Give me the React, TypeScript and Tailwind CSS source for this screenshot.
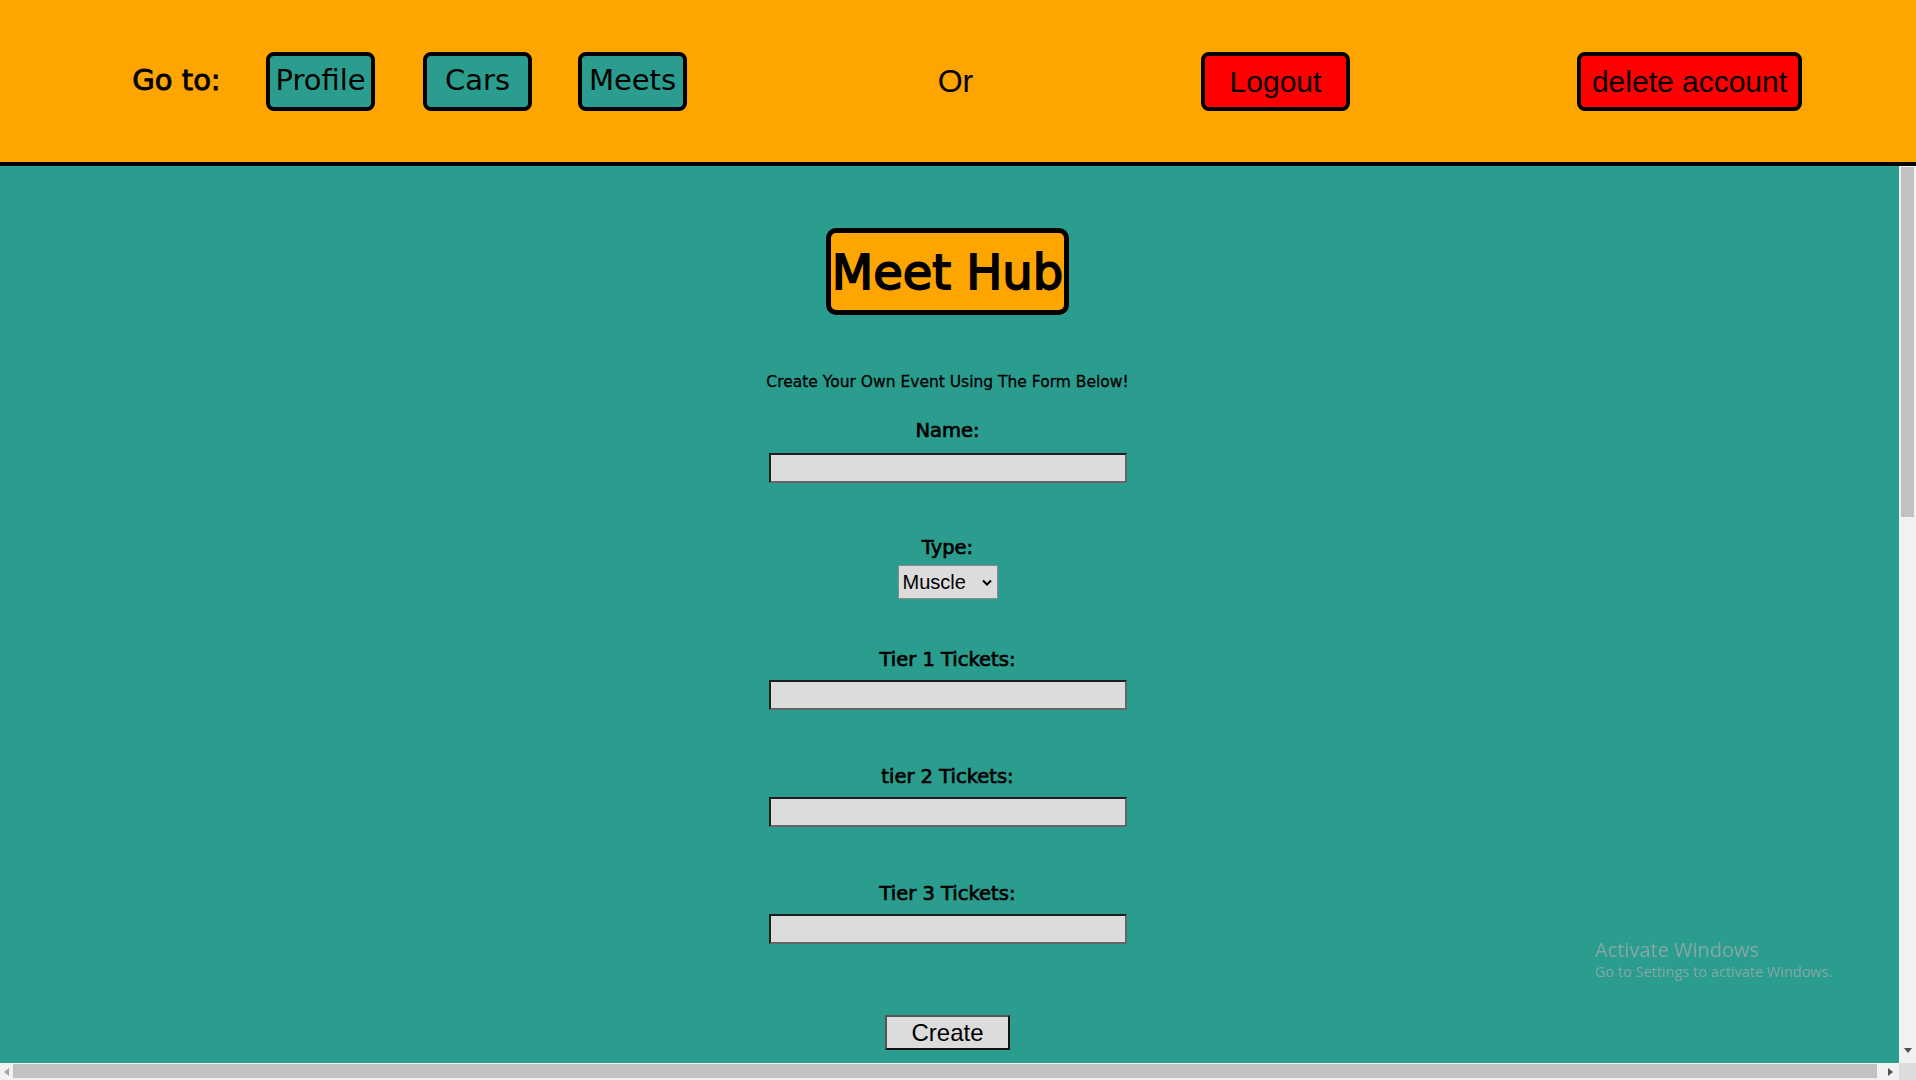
import { ReactNode } from "react";

const lucida = "font-['DejaVu_Sans',Verdana,sans-serif]";
const arial = "font-['Liberation_Sans',Arial,sans-serif]";

const NavButton = ({ children }: { children: ReactNode }) => (
  <button
    className={`w-[109px] h-[59px] shrink-0 flex items-center justify-center bg-[#2a9d8f] border-4 border-black rounded-[8px] text-[29px] text-black whitespace-nowrap ${lucida}`}
  >
    {children}
  </button>
);

const RedButton = ({ children, width }: { children: ReactNode; width: string }) => (
  <button
    className={`${width} h-[59px] shrink-0 flex items-center justify-center bg-[#ff0000] border-4 border-black rounded-[8px] text-[30px] text-black whitespace-nowrap ${arial}`}
  >
    {children}
  </button>
);

const Label = ({ children, mt }: { children: ReactNode; mt: string }) => (
  <label
    className={`${mt} block h-[24px] leading-[24px] text-[19.5px] text-black whitespace-nowrap [-webkit-text-stroke:0.7px_black] ${lucida}`}
  >
    {children}
  </label>
);

const Field = ({ mt }: { mt: string }) => (
  <input
    type="text"
    className={`${mt} block w-[358px] h-[30px] bg-[#dcdcdc] border-2 border-t-[#1e1e1e] border-l-[#1e1e1e] border-b-[#666666] border-r-[#666666] outline-none`}
  />
);

const App = () => {
  return (
    <div className="h-screen w-full flex flex-col overflow-hidden">
      <header className="h-[166px] shrink-0 w-full flex items-center bg-[#ffa500] border-b-4 border-black">
        <span
          className={`ml-[132px] w-[89px] shrink-0 text-center text-[29px] text-black whitespace-nowrap [-webkit-text-stroke:0.9px_black] ${lucida}`}
        >
          Go to:
        </span>
        <div className="ml-[45px]">
          <NavButton>Profile</NavButton>
        </div>
        <div className="ml-[48px]">
          <NavButton>Cars</NavButton>
        </div>
        <div className="ml-[46px]">
          <NavButton>Meets</NavButton>
        </div>
        <span
          className={`ml-[250px] w-[37px] shrink-0 text-center text-[32px] text-black whitespace-nowrap ${arial}`}
        >
          Or
        </span>
        <div className="ml-[227px]">
          <RedButton width="w-[149px]">Logout</RedButton>
        </div>
        <div className="ml-[227px]">
          <RedButton width="w-[225px]">delete account</RedButton>
        </div>
      </header>

      <div className="flex-1 min-h-0 flex">
        <main className="flex-1 min-w-0 overflow-y-auto overflow-x-hidden bg-[#2a9d8f] [scrollbar-width:none]">
          <div className="w-[1895px] flex flex-col items-center">
            <div className="mt-[62px] w-[243px] h-[87px] flex items-center justify-center bg-[#ffa500] border-[5px] border-black rounded-[10px]">
              <h1
                className={`text-[48px] leading-none text-black whitespace-nowrap [-webkit-text-stroke:1.8px_black] ${lucida}`}
              >
                Meet Hub
              </h1>
            </div>

            <p
              className={`mt-[58px] h-[18px] leading-[18px] text-[15.5px] text-black whitespace-nowrap [-webkit-text-stroke:0.3px_black] ${lucida}`}
            >
              Create Your Own Event Using The Form Below!
            </p>

            <form className="flex flex-col items-center">
              <Label mt="mt-[28px]">Name:</Label>
              <Field mt="mt-[10px]" />

              <Label mt="mt-[53px]">Type:</Label>
              <div className="mt-[5px] relative w-[100px] h-[34px]">
                <select
                  defaultValue="Muscle"
                  className={`w-full h-full appearance-none bg-[#dcdcdc] border border-[#8a8a8a] pl-[4px] text-[20px] text-black outline-none ${arial}`}
                >
                  <option>Muscle</option>
                  <option>Tuner</option>
                  <option>Exotic</option>
                  <option>Classic</option>
                </select>
                <svg
                  className="absolute right-[6px] top-[14px] pointer-events-none"
                  width="10"
                  height="7"
                  viewBox="0 0 10 7"
                >
                  <path d="M1 1.5 L5 5.5 L9 1.5" fill="none" stroke="black" strokeWidth="2" />
                </svg>
              </div>

              <Label mt="mt-[49px]">Tier 1 Tickets:</Label>
              <Field mt="mt-[8px]" />

              <Label mt="mt-[55px]">tier 2 Tickets:</Label>
              <Field mt="mt-[8px]" />

              <Label mt="mt-[55px]">Tier 3 Tickets:</Label>
              <Field mt="mt-[8px]" />

              <button
                type="button"
                className={`mt-[71px] w-[125px] h-[35px] bg-[#dcdcdc] border-2 border-t-[#555555] border-l-[#555555] border-b-[#111111] border-r-[#111111] text-[24px] leading-none text-black ${arial}`}
              >
                Create
              </button>
            </form>
            <div className="h-[1250px]" />
          </div>
        </main>

        {/* vertical scrollbar */}
        <div className="w-[17px] shrink-0 flex flex-col bg-[#f1f1f1]">
          <div className="mt-[1px] mx-[2px] h-[350px] bg-[#c1c1c1]" />
          <div className="flex-1" />
          <div className="h-[17px] flex items-start justify-center pt-[2px]">
            <svg width="8" height="5" viewBox="0 0 8 5">
              <path d="M0 0 H8 L4 5 Z" fill="#505050" />
            </svg>
          </div>
        </div>
      </div>

      {/* horizontal scrollbar */}
      <div className="h-[17px] shrink-0 flex bg-[#f1f1f1]">
        <div className="w-[13px] shrink-0 flex items-center justify-center">
          <svg width="5" height="8" viewBox="0 0 5 8">
            <path d="M5 0 V8 L0 4 Z" fill="#a3a3a3" />
          </svg>
        </div>
        <div className="flex-1 mt-[1px] mb-[2px] bg-[#c1c1c1]" />
        <div className="w-[22px] shrink-0 flex items-center justify-end pr-[6px]">
          <svg width="5" height="8" viewBox="0 0 5 8">
            <path d="M0 0 V8 L5 4 Z" fill="#505050" />
          </svg>
        </div>
        <div className="w-[17px] shrink-0 bg-[#dcdcdc]" />
      </div>

      <div className="fixed left-[1595px] top-[938px] pointer-events-none font-['Open_Sans','Noto_Sans',sans-serif] text-[#86a7a2]">
        <p className="text-[20px] leading-[24px]">Activate Windows</p>
        <p className="text-[14.5px] leading-[20px]">Go to Settings to activate Windows.</p>
      </div>
    </div>
  );
};

export default App;
